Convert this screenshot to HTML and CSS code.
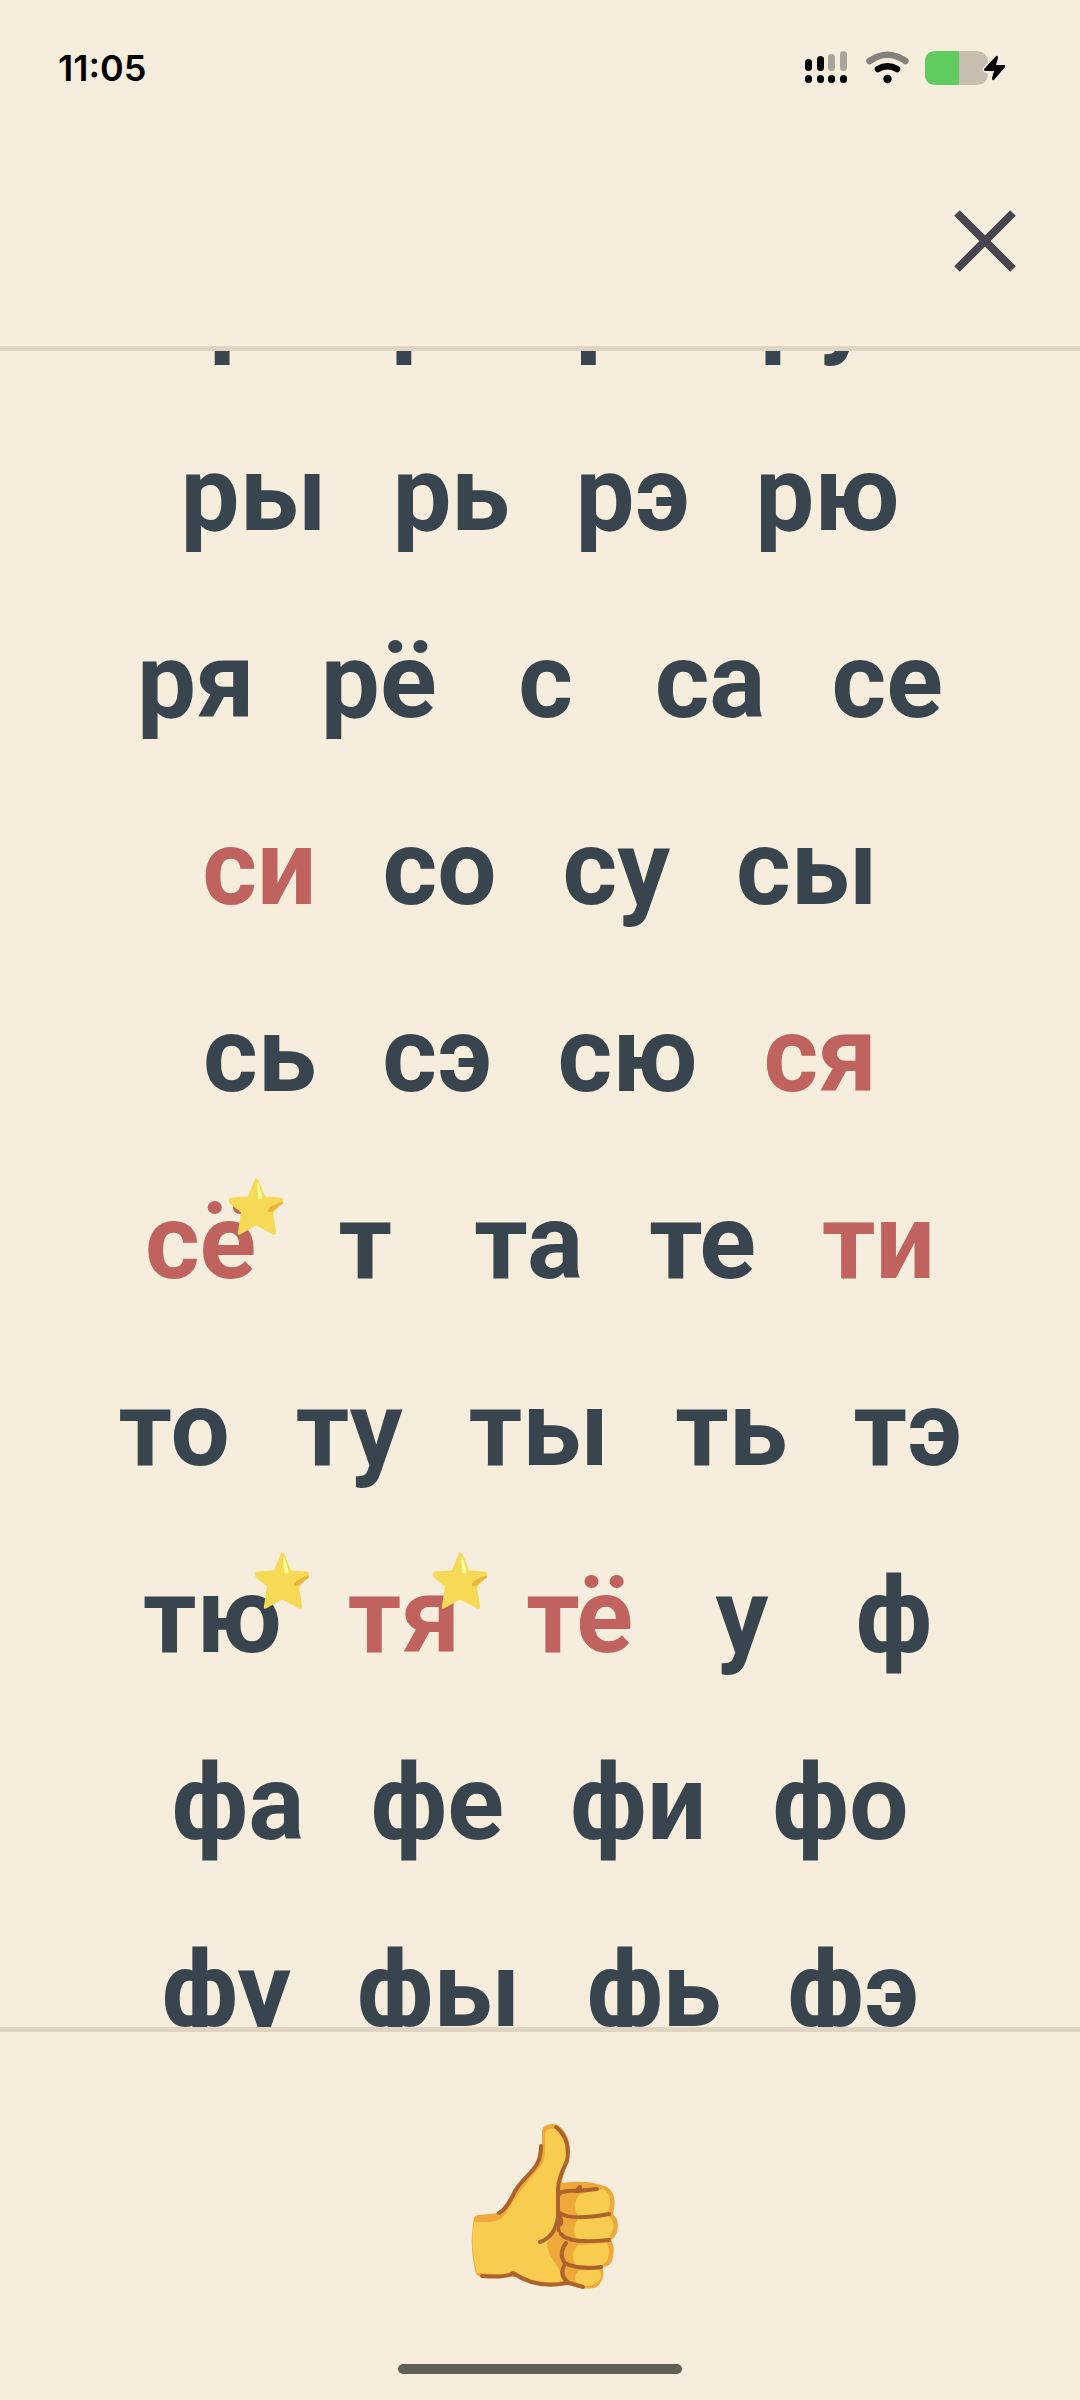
FILE: index.html
```html
<!DOCTYPE html>
<html lang="ru">
<head>
<meta charset="utf-8">
<meta name="viewport" content="width=device-width, initial-scale=1">
<title>Слоги</title>
<link rel="stylesheet" href="styles.css">
</head>
<body>
<svg class="defs" aria-hidden="true">
  <symbol id="star" viewBox="0 0 56 56">
    <path fill="#f6d955" d="M28 0Q30 0 31 3L37 18 52 19Q55 19 55 22Q54 26 51 28L45 35 48 53Q48 57 45 56L28 47 12 56Q9 57 10 53L13 34 2 25Q-1 20 3 19L20 18 26 3Q27 0 28 0Z"/>
    <path fill="#ffff9c" d="M29 5Q30 4 31 6L34 17Q35 21 33 21Q30 21 30 18Z"/>
    <path fill="#ebb23c" d="M55 23Q50 24 43 28Q39 31 40 33Q43 35 48 30L55 25Z"/>
  </symbol>
</svg>
<div class="screen">
  <header class="top">
    <div class="status">
      <time class="clock">11:05</time>
      <div class="indicators">
        <svg width="42" height="34" viewBox="0 0 42 34" role="img" aria-label="Сигнал">
          <rect x="0" y="8" width="7" height="12" rx="3.5"/>
          <rect x="12" y="5" width="7" height="15" rx="3.5"/>
          <g opacity=".3"><rect x="23" y="3" width="7" height="17" rx="3.5"/><rect x="35" y="0" width="7" height="20" rx="3.5"/></g>
          <rect x="0" y="24" width="7" height="8" rx="3.5"/><rect x="12" y="24" width="7" height="8" rx="3.5"/><rect x="23" y="24" width="7" height="8" rx="3.5"/><rect x="35" y="24" width="7" height="8" rx="3.5"/>
        </svg>
        <svg class="wifi" width="44" height="34" viewBox="0 0 44 34" fill="none" stroke="#000" stroke-linecap="round" role="img" aria-label="Wi-Fi">
          <path d="M3.500 10Q21.500-2.500 39.500 10" stroke-width="6.500" opacity=".45"/>
          <path d="M12 18Q21.500 12.500 31 18" stroke-width="6.500"/>
          <circle cx="21.500" cy="28" r="4.200" fill="#000" stroke="none"/>
        </svg>
        <svg class="battery" width="82" height="34" viewBox="0 0 82 34" role="img" aria-label="Батарея">
          <path fill="#c7beb0" d="M34 0H52Q63 1 63 11L58 19 63 23Q62 34 51 34H34Z"/>
          <path fill="#60cc5d" d="M34 0H11Q0 0 0 11V23Q0 34 11 34H34Z"/>
          <path stroke="#f6eddc" stroke-width="3" paint-order="stroke" d="M71 5Q73 4 73 7L71 14H79Q81 14 80 16L69 29Q67 30 67 27L69 20H60Q58 19 60 17Z"/>
        </svg>
      </div>
    </div>
    <button class="close" aria-label="Закрыть">
      <svg width="62" height="62" viewBox="0 0 62 62" fill="none" stroke="#49454f" stroke-width="8"><path d="M3 3 59 59M59 3 3 59"/></svg>
    </button>
  </header>
  <main class="list">
    <div class="rows">
      <div class="row"><button>ре</button><button>ри</button><button>ро</button><button>ру</button></div>
      <div class="row"><button>ры</button><button>рь</button><button>рэ</button><button>рю</button></div>
      <div class="row"><button>ря</button><button>рё</button><button>с</button><button>са</button><button>се</button></div>
      <div class="row"><button class="hard">си</button><button>со</button><button>су</button><button>сы</button></div>
      <div class="row"><button>сь</button><button>сэ</button><button>сю</button><button class="hard">ся</button></div>
      <div class="row"><button class="hard">сё<svg class="star"><use href="#star"/></svg></button><button>т</button><button>та</button><button>те</button><button class="hard">ти</button></div>
      <div class="row"><button>то</button><button>ту</button><button>ты</button><button>ть</button><button>тэ</button></div>
      <div class="row"><button>тю<svg class="star"><use href="#star"/></svg></button><button class="hard">тя<svg class="star"><use href="#star"/></svg></button><button class="hard">тё</button><button>у</button><button>ф</button></div>
      <div class="row"><button>фа</button><button>фе</button><button>фи</button><button>фо</button></div>
      <div class="row"><button>фу</button><button>фы</button><button>фь</button><button>фэ</button></div>
    </div>
  </main>
  <footer class="bottom">
    <button class="like" aria-label="Отлично">
      <svg width="150" height="168" viewBox="0 0 150 168" fill="none" stroke-linecap="round" stroke-linejoin="round">
        <path fill="#efa83a" d="M3 94Q4 91 8 91L28 89Q38 75 46 62C56 49 70 42 71 28L71 7Q72 0 82 0Q88 0 93 7Q102 20 97 37Q91 53 91 59Q116 55 136 63Q146 70 143 85L142 90Q149 97 146 107Q145 113 140 116Q145 124 141 137Q138 143 131 143Q135 152 128 161Q122 167 105 163L90 158Q66 164 45 153L10 153Q5 152 4 146Q-2 120 3 94Z"/>
        <path fill="#f8cd4f" d="M3 98Q16 99 25 97Q33 94 38 85C48 65 68 47 73 36Q75 24 74 11Q74 5 80 5Q87 2 93 11Q98 22 95 34L88 60 87 92Q87 103 76 119Q76 129 88 145L92 157Q68 162 45 151L6 149Q-1 122 3 98Z"/>
        <path fill="#f8cd4f" d="M107 92Q100 80 109 70L132 65Q140 69 139 80Q138 91 131 92ZM107 117Q99 106 107 95L138 92Q145 99 141 109Q138 116 130 117ZM105 141Q98 131 107 121L136 119Q140 128 136 137Q133 141 127 142ZM106 161Q101 151 109 146L128 146Q133 151 127 158Q119 164 106 161Z"/>
        <path stroke="#ad642c" stroke-width="4" d="M28 89Q36 85 44 67C56 48 70 46 70 22M85 3Q100 15 96 37Q87 55 87 65V93Q84 113 69 118M88 70Q92 66 106 67L126 65M106 66 109 63M89 89Q100 97 138 90M90 110Q97 120 138 116M95 119Q87 130 94 139Q107 146 130 143M94 140Q87 151 98 159L112 163M96 159Q65 165 42 149Q36 154 11 152"/>
        <path fill="#ad642c" d="M86 83Q97 99 89 103Q90 113 97 119L86 107Z"/>
      </svg>
    </button>
    <div class="home"></div>
  </footer>
</div>
</body>
</html>
```
FILE: styles.css
```css
* { box-sizing: border-box; }
body {
  margin: 0;
  background: #f6eddc;
  color: #39454e;
  font-family: Roboto, sans-serif;
}
button {
  padding: 0;
  border: 0;
  background: none;
  color: inherit;
  font: inherit;
  cursor: pointer;
}
svg { display: block; }
.defs { position: absolute; width: 0; height: 0; }
.screen {
  display: flex;
  flex-direction: column;
  height: 100vh;
}
.top {
  flex: none;
  padding: 48px 64px 74px 58px;
  border-bottom: 5px solid #dfd4c1;
}
.status {
  display: flex;
  align-items: center;
  justify-content: space-between;
  height: 40px;
}
.clock {
  color: #000;
  font: 600 36px/38px Inter, sans-serif;
}
.indicators { display: flex; padding-right: 9px; }
.wifi { margin-left: 19px; }
.battery { margin-left: 15px; }
.close { display: block; margin: 122px 0 0 auto; }
.list {
  flex: 1;
  min-height: 0;
  overflow: hidden;
}
.rows { margin-top: -137px; }
.row {
  display: flex;
  justify-content: center;
  gap: 66px;
  padding: 32px 0;
  font-size: 105px;
  font-weight: 700;
  line-height: 123px;
}
.row button { position: relative; min-width: 86px; }
.row .hard { color: #c0625d; }
.star {
  position: absolute;
  top: -3px;
  right: -28px;
  width: 56px;
  height: 57px;
}
.bottom {
  display: flex;
  flex-direction: column;
  align-items: center;
  flex: none;
  padding: 92px 0 26px;
  border-top: 5px solid #dfd4c1;
}
.like { padding-left: 12px; }
.home {
  width: 284px;
  height: 10px;
  margin-top: 72px;
  border-radius: 5px;
  background: #625f57;
}
```
